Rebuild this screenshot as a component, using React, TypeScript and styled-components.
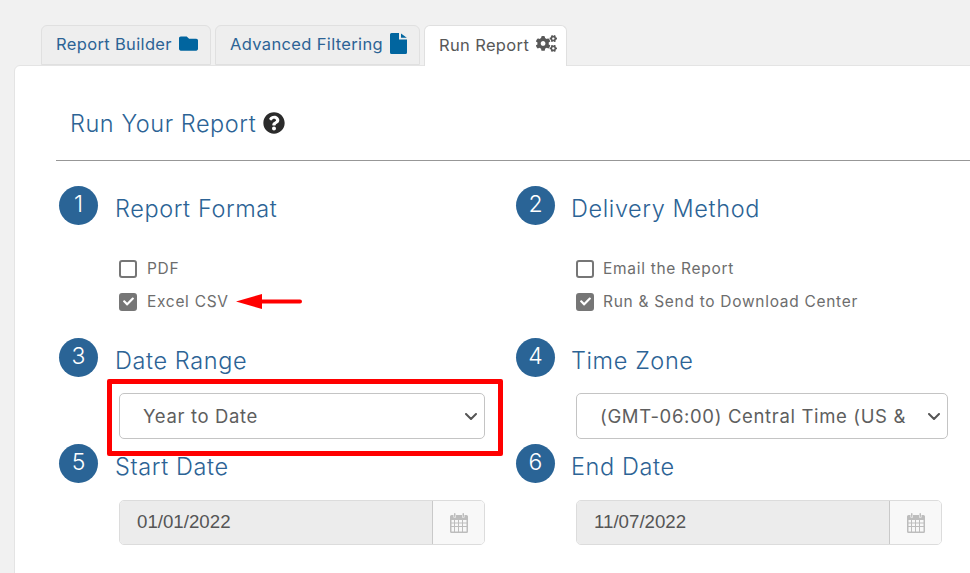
import React from "react";
import styled, { createGlobalStyle } from "styled-components";
import { FaFolder, FaCogs, FaQuestionCircle, FaCheck } from "react-icons/fa";

const Global = createGlobalStyle`
  html, body { margin: 0; padding: 0; height: 100%; overflow: hidden; background: #f1f1f1; }
  body { font-family: Inter, "Open Sans", Arial, sans-serif; }
`;
const Page = styled.div`
  height: 573px;
  overflow: hidden;
  padding: 25px 0 0 14px;
  box-sizing: border-box;
`;
const Tabs = styled.div`
  display: flex;
  gap: 4px;
  margin-left: 27px;
  position: relative;
  z-index: 1;
`;
const Tab = styled.div<{ $active?: boolean; $w: number }>`
  box-sizing: border-box;
  width: ${(p) => p.$w}px;
  height: ${(p) => (p.$active ? 41 : 40)}px;
  margin-bottom: ${(p) => (p.$active ? -1 : 0)}px;
  display: flex;
  align-items: center;
  gap: 7px;
  padding: 0 0 ${(p) => (p.$active ? 3 : 2)}px 14px;
  border: 1px solid #e0e0e0;
  border-bottom: ${(p) => (p.$active ? "none" : "1px solid #e0e0e0")};
  border-radius: 6px 6px 0 0;
  background: ${(p) => (p.$active ? "#fff" : "#eeeeee")};
  color: ${(p) => (p.$active ? "#585858" : "#2c6395")};
  font-size: 16.5px;
  letter-spacing: 0.35px;
  white-space: nowrap;
  svg { flex: none; color: ${(p) => (p.$active ? "#585858" : "#01659f")}; margin-top: -2px; }
`;
const Panel = styled.div`
  box-sizing: border-box;
  width: 1000px;
  height: 540px;
  background: #fff;
  border: 1px solid #e4e4e4;
  border-radius: 6px 0 0 0;
  padding-left: 41px;
`;
const Header = styled.div`
  height: 95px;
  box-sizing: border-box;
  padding: 20px 0 0 14px;
  border-bottom: 1px solid #979797;
  display: flex;
  align-items: center;
  gap: 7px;
  color: #2c6395;
  font-size: 23.5px;
  font-weight: 300;
  letter-spacing: 0.55px;
  svg { color: #2b2b2b; }
`;
const Grid = styled.div`
  display: grid;
  grid-template-columns: 457px 1fr;
  padding-top: 25px;
`;
const Section = styled.section<{ $right?: boolean }>`
  display: grid;
  grid-template-columns: 59px 1fr;
  align-content: start;
  h3 { margin-left: ${(p) => (p.$right ? -1 : 0)}px; }
  label { gap: ${(p) => (p.$right ? 9 : 10)}px; }
`;
const Badge = styled.div`
  width: 39px;
  height: 39px;
  margin-left: 3px;
  border-radius: 50%;
  background: #2a6496;
  color: #fff;
  font-size: 23px;
  font-weight: 300;
  display: flex;
  align-items: center;
  justify-content: center;
  padding-bottom: 3px;
  box-sizing: border-box;
`;
const Title = styled.h3`
  margin: 0;
  height: 44px;
  line-height: 46px;
  color: #2c6395;
  font-size: 23.5px;
  font-weight: 300;
  letter-spacing: 0.6px;
`;
const Body = styled.div<{ $top: number; $bottom: number }>`
  grid-column: 2;
  padding-left: 4px;
  margin-top: ${(p) => p.$top}px;
  margin-bottom: ${(p) => p.$bottom}px;
  position: relative;
`;
const Option = styled.label`
  display: flex;
  align-items: center;
  gap: 10px;
  height: 33px;
  color: #6d6d6d;
  font-size: 15.5px;
  font-weight: 400;
  letter-spacing: 0.7px;
  position: relative;
`;
const Box = styled.span<{ $checked?: boolean }>`
  box-sizing: border-box;
  width: 18px;
  height: 18px;
  border-radius: 3px;
  border: 2px solid #767676;
  background: ${(p) => (p.$checked ? "#767676" : "#fff")};
  color: #fff;
  display: flex;
  align-items: center;
  justify-content: center;
`;
const Arrow = styled.svg`
  position: absolute;
  left: 117px;
  top: 9px;
`;
const SelectWrap = styled.div<{ $w: number }>`
  position: relative;
  width: ${(p) => p.$w}px;
`;
const Select = styled.select`
  box-sizing: border-box;
  display: block;
  appearance: none;
  width: 100%;
  height: 46px;
  padding: 0 40px 0 23px;
  background: #fff;
  border: 1px solid #c4c4c4;
  border-radius: 5px;
  color: #5e5e5e;
  font-family: Inter, "Open Sans", Arial, sans-serif;
  font-size: 18.5px;
  font-weight: 400;
  letter-spacing: 0.65px;
`;
const Chevron = styled.svg`
  position: absolute;
  right: 8px;
  top: 20px;
  pointer-events: none;
`;
const Highlight = styled.div`
  position: absolute;
  left: -8px;
  top: -14px;
  width: 396px;
  height: 77px;
  box-sizing: border-box;
  border: 5px solid #ff0000;
  border-radius: 2px;
  pointer-events: none;
`;
const DateGroup = styled.div`
  display: flex;
  width: 366px;
  height: 45px;
  box-sizing: border-box;
  border: 1px solid #dcdcdc;
  border-radius: 5px;
  overflow: hidden;
`;
const DateValue = styled.div`
  flex: 1;
  display: flex;
  align-items: center;
  padding-left: 17px;
  padding-bottom: 2px;
  background: #ececec;
  border-right: 1px solid #c9c9c9;
  color: #555;
  font-family: "Liberation Sans", Arial, sans-serif;
  font-size: 18.7px;
`;
const DateAddon = styled.div`
  width: 51px;
  background: #f8f8f8;
  color: #bdbdbd;
  display: flex;
  align-items: center;
  justify-content: center;
`;

const FileIcon = () => (
  <svg width="17" height="21" viewBox="0 0 17 21" fill="currentColor">
    <path d="M1.5 0H9v6.5h8V19.5A1.5 1.5 0 0 1 15.5 21H1.5A1.5 1.5 0 0 1 0 19.5V1.5A1.5 1.5 0 0 1 1.5 0Z" />
    <path d="M11 0.5 16.8 4.8H11Z" />
  </svg>
);

const CalendarIcon = () => (
  <svg width="18" height="20" viewBox="0 0 18 20" fill="currentColor">
    <path fillRule="evenodd" d="M1.5 2H3.5V4.5H6V2H12V4.5H14.5V2H16.5A1.5 1.5 0 0 1 18 3.5V18.5A1.5 1.5 0 0 1 16.5 20H1.5A1.5 1.5 0 0 1 0 18.5V3.5A1.5 1.5 0 0 1 1.5 2ZM1.5 7V9.5H4V7ZM5 7V9.5H8V7ZM9 7V9.5H12V7ZM13 7V9.5H16.5V7ZM1.5 10.5V13H4V10.5ZM5 10.5V13H8V10.5ZM9 10.5V13H12V10.5ZM13 10.5V13H16.5V10.5ZM1.5 14V18.5H4V14ZM5 14V18.5H8V14ZM9 14V18.5H12V14ZM13 14V18.5H16.5V14Z" />
    <rect x="4" y="0" width="1.5" height="4" rx="0.7" />
    <rect x="12.5" y="0" width="1.5" height="4" rx="0.7" />
  </svg>
);

const ChevronIcon = () => (
  <Chevron width="12" height="7" viewBox="0 0 12 7" fill="none" stroke="#555" strokeWidth="2" strokeLinecap="round" strokeLinejoin="round">
    <path d="M1 1 6 6 11 1" />
  </Chevron>
);

const Check = ({ label, checked, children }: { label: string; checked?: boolean; children?: React.ReactNode }) => (
  <Option>
    <Box $checked={checked}>{checked && <FaCheck size={11} />}</Box>
    {label}
    {children}
  </Option>
);

export default function App() {
  return (
    <Page>
      <Global />
      <Tabs>
        <Tab $w={170}>Report Builder <FaFolder size={19} /></Tab>
        <Tab $w={205}>Advanced Filtering <FileIcon /></Tab>
        <Tab $w={143} $active>Run Report <FaCogs size={21} /></Tab>
      </Tabs>
      <Panel>
        <Header>
          Run Your Report <FaQuestionCircle size={22} />
        </Header>
        <Grid>
          <Section>
            <Badge>1</Badge>
            <Title>Report Format</Title>
            <Body $top={22} $bottom={20}>
              <Check label="PDF" />
              <Check label="Excel CSV" checked>
                <Arrow width="66" height="15" viewBox="0 0 66 15">
                  <path d="M0 7.5 26 0V5.5H64a2 2 0 0 1 0 4H26V15Z" fill="#f00" />
                </Arrow>
              </Check>
            </Body>
          </Section>
          <Section $right>
            <Badge>2</Badge>
            <Title>Delivery Method</Title>
            <Body $top={22} $bottom={20}>
              <Check label="Email the Report" />
              <Check label="Run & Send to Download Center" checked />
            </Body>
          </Section>
          <Section>
            <Badge>3</Badge>
            <Title>Date Range</Title>
            <Body $top={11} $bottom={5}>
              <SelectWrap $w={366}>
                <Select defaultValue="ytd">
                  <option value="ytd">Year to Date</option>
                </Select>
                <ChevronIcon />
              </SelectWrap>
              <Highlight />
            </Body>
          </Section>
          <Section $right>
            <Badge>4</Badge>
            <Title>Time Zone</Title>
            <Body $top={11} $bottom={5}>
              <SelectWrap $w={372}>
                <Select defaultValue="cst">
                  <option value="cst">(GMT-06:00) Central Time (US &amp; Canada)</option>
                </Select>
                <ChevronIcon />
              </SelectWrap>
            </Body>
          </Section>
          <Section>
            <Badge>5</Badge>
            <Title>Start Date</Title>
            <Body $top={12} $bottom={0}>
              <DateGroup>
                <DateValue>01/01/2022</DateValue>
                <DateAddon><CalendarIcon /></DateAddon>
              </DateGroup>
            </Body>
          </Section>
          <Section $right>
            <Badge>6</Badge>
            <Title>End Date</Title>
            <Body $top={12} $bottom={0}>
              <DateGroup>
                <DateValue>11/07/2022</DateValue>
                <DateAddon><CalendarIcon /></DateAddon>
              </DateGroup>
            </Body>
          </Section>
        </Grid>
      </Panel>
    </Page>
  );
}
